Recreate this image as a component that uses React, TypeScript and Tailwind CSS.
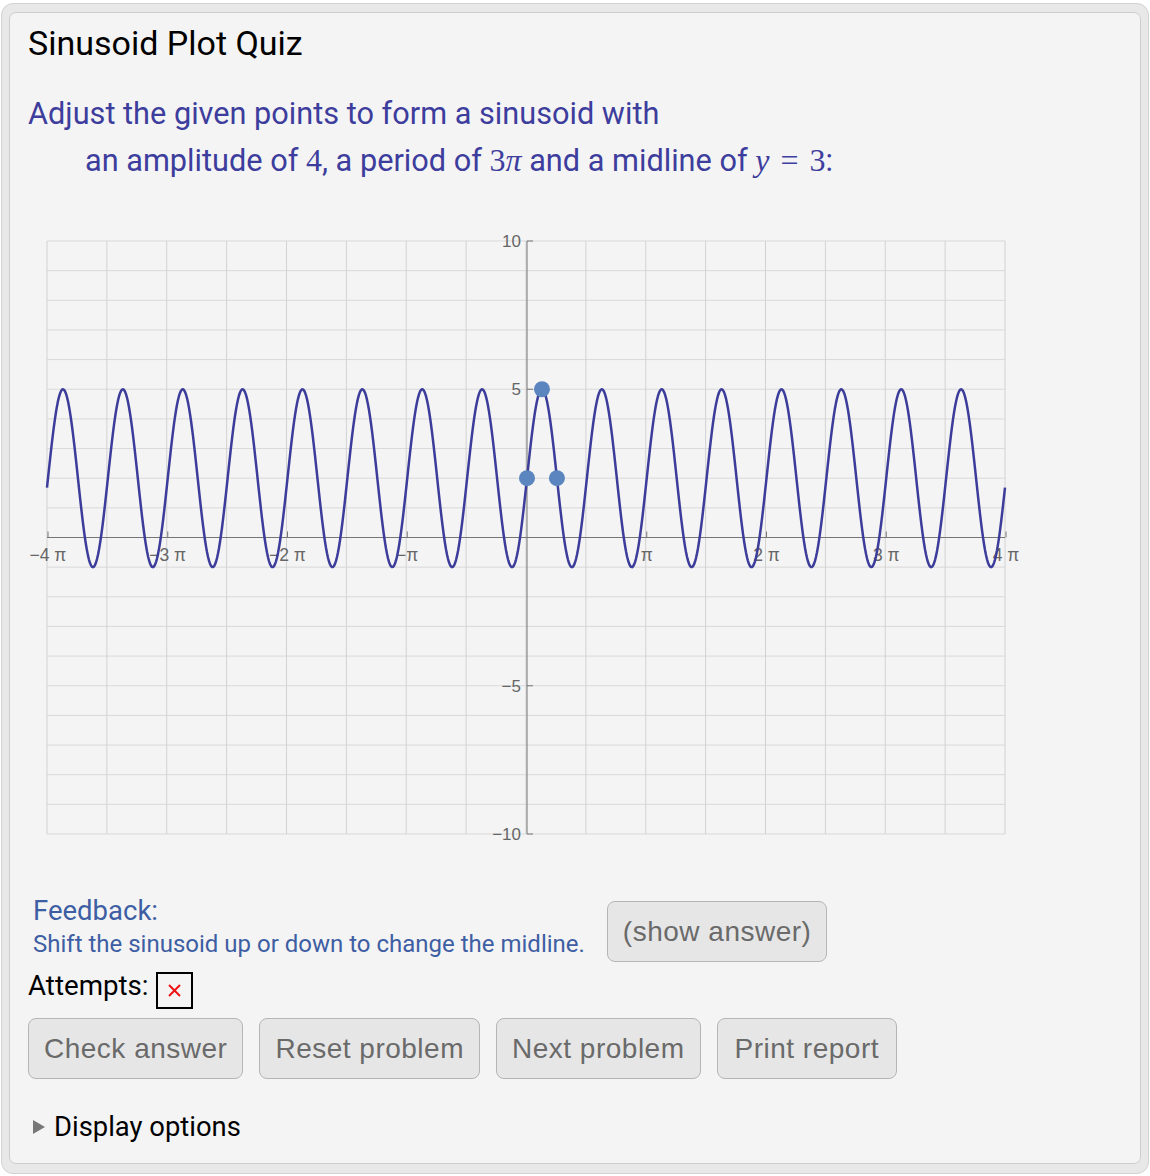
const OX = 527
const OY = 537.5
const UY = 29.65
const PI_PX = 119.75
const LEFT = 47
const RIGHT = 1005
const TOP = 241
const BOTTOM = 834

function curvePath() {
  let d = ""
  for (let px = LEFT; px <= RIGHT; px += 1) {
    const x = (Math.PI * (px - OX)) / PI_PX
    const y = 2 + 3 * Math.sin(4 * x)
    const py = OY - y * UY
    d += (px === LEFT ? "M" : "L") + px.toFixed(1) + " " + py.toFixed(2) + " "
  }
  return d
}

const xLabels = [
  { k: -4, t: "−4 π" },
  { k: -3, t: "−3 π" },
  { k: -2, t: "−2 π" },
  { k: -1, t: "−π" },
  { k: 1, t: "π" },
  { k: 2, t: "2 π" },
  { k: 3, t: "3 π" },
  { k: 4, t: "4 π" },
]

const yLabels = [
  { v: 10, t: "10" },
  { v: 5, t: "5" },
  { v: -5, t: "−5" },
  { v: -10, t: "−10" },
]

function Graph() {
  const hLines = Array.from({ length: 21 }, (_, i) => OY - (i - 10) * UY)
  const vLines = Array.from({ length: 17 }, (_, i) => LEFT + i * (PI_PX / 2))

  return (
    <svg
      width={1012}
      height={640}
      viewBox="28 220 1012 640"
      className="mt-[36px] block overflow-visible"
      style={{ fontFamily: '"Liberation Sans", Arial, sans-serif' }}
    >
      {hLines.map((y, i) => (
        <line key={"h" + i} x1={LEFT} x2={RIGHT} y1={y} y2={y} stroke="#d9d9d9" strokeWidth={1} />
      ))}
      {vLines.map((x, i) => (
        <line key={"v" + i} x1={x} x2={x} y1={TOP} y2={BOTTOM} stroke="#d2d2d2" strokeWidth={1} />
      ))}

      <line x1={LEFT} x2={RIGHT} y1={OY} y2={OY} stroke="#757575" strokeWidth={1} />
      <line x1={OX} x2={OX} y1={TOP} y2={BOTTOM} stroke="#757575" strokeWidth={1} />

      {xLabels.map((l) => {
        const x = OX + l.k * PI_PX
        return (
          <g key={l.t}>
            <line x1={x} x2={x} y1={OY - 6} y2={OY} stroke="#757575" strokeWidth={1} />
            <text x={x} y={561} textAnchor="middle" fontSize={17.5} fill="#666">
              {l.t}
            </text>
          </g>
        )
      })}

      {yLabels.map((l) => {
        const y = OY - l.v * UY
        return (
          <g key={l.t}>
            <line x1={OX} x2={OX + 6} y1={y} y2={y} stroke="#757575" strokeWidth={1} />
            <text x={521} y={y + 6} textAnchor="end" fontSize={17} fill="#666">
              {l.t}
            </text>
          </g>
        )
      })}

      <path d={curvePath()} fill="none" stroke="#3c3c9a" strokeWidth={2.5} strokeLinejoin="round" />

      <circle cx={OX} cy={OY - 2 * UY} r={8} fill="#5b85bf" />
      <circle cx={OX + PI_PX / 8} cy={OY - 5 * UY} r={8} fill="#5b85bf" />
      <circle cx={OX + PI_PX / 4} cy={OY - 2 * UY} r={8} fill="#5b85bf" />
    </svg>
  )
}

function Btn({ children, className = "" }: { children: React.ReactNode; className?: string }) {
  return (
    <button
      className={
        "h-[61px] rounded-[8px] border-[1.5px] border-[#b5b5b5] bg-[#e6e6e6] px-[15px] text-[28px] tracking-[0.5px] text-[#6a6a6a] " +
        className
      }
      style={{ fontFamily: '"Liberation Sans", Arial, sans-serif' }}
    >
      {children}
    </button>
  )
}

const serif = { fontFamily: '"Liberation Serif", "Times New Roman", serif' }

export default function App() {
  return (
    <div className="pl-[1px] pt-[3px]" style={{ fontFamily: 'Roboto, "Noto Sans", sans-serif' }}>
      <div className="flex h-[1171px] w-[1148px] flex-col rounded-[12px] border border-[#d2d2d2] bg-[#e8e8e8] px-[7px] pb-[9px] pt-[8px]">
        <div className="flex-1 rounded-[7px] border border-[#cdcdcd] bg-[#f4f4f4] pl-[18px] pt-[10px]">
          <h1 className="text-[34px] leading-[40px] text-black">Sinusoid Plot Quiz</h1>

          <p className="mt-[27px] pl-[57px] -indent-[57px] text-[30.7px] leading-[47px] text-[#3d3d9d]">
            Adjust the given points to form a sinusoid with
            <br />
            an amplitude of <span style={serif} className="text-[32px]">4</span>, a period of{" "}
            <span style={serif} className="text-[32px]">
              3<i>π</i>
            </span>{" "}
            and a midline of{" "}
            <span style={serif} className="text-[32px]">
              <i>y</i>
              <span className="mx-[11px]">=</span>3
            </span>
            :
          </p>

          <Graph />

          <div className="mt-[34px] flex items-start gap-[22px]">
            <div className="pl-[5px] text-[#3e5ea3]">
              <div className="text-[27.5px] leading-[34px]">Feedback:</div>
              <div className="text-[24px] leading-[32px]">Shift the sinusoid up or down to change the midline.</div>
            </div>
            <Btn className="mt-[7px]">(show answer)</Btn>
          </div>

          <div className="mt-[7px] flex items-start">
            <span className="text-[27.7px] leading-[34px] text-black">Attempts:</span>
            <div className="ml-[7px] mt-[3px] flex h-[37px] w-[37px] items-center justify-center border-2 border-black">
              <svg width="15" height="15" viewBox="0 0 15 15">
                <line x1="2" y1="2" x2="13" y2="13" stroke="#ee1111" strokeWidth="2" />
                <line x1="13" y1="2" x2="2" y2="13" stroke="#ee1111" strokeWidth="2" />
              </svg>
            </div>
          </div>

          <div className="mt-[9px] flex gap-[16px]">
            <Btn>Check answer</Btn>
            <Btn>Reset problem</Btn>
            <Btn>Next problem</Btn>
            <Btn className="px-[17px]">Print report</Btn>
          </div>

          <div className="mt-[31px] flex items-center gap-[9px] pl-[5px]">
            <svg width="12" height="14" viewBox="0 0 12 14">
              <polygon points="0,0 12,7 0,14" fill="#777" />
            </svg>
            <span className="text-[27.4px] leading-[34px] text-black">Display options</span>
          </div>
        </div>
      </div>
    </div>
  )
}
